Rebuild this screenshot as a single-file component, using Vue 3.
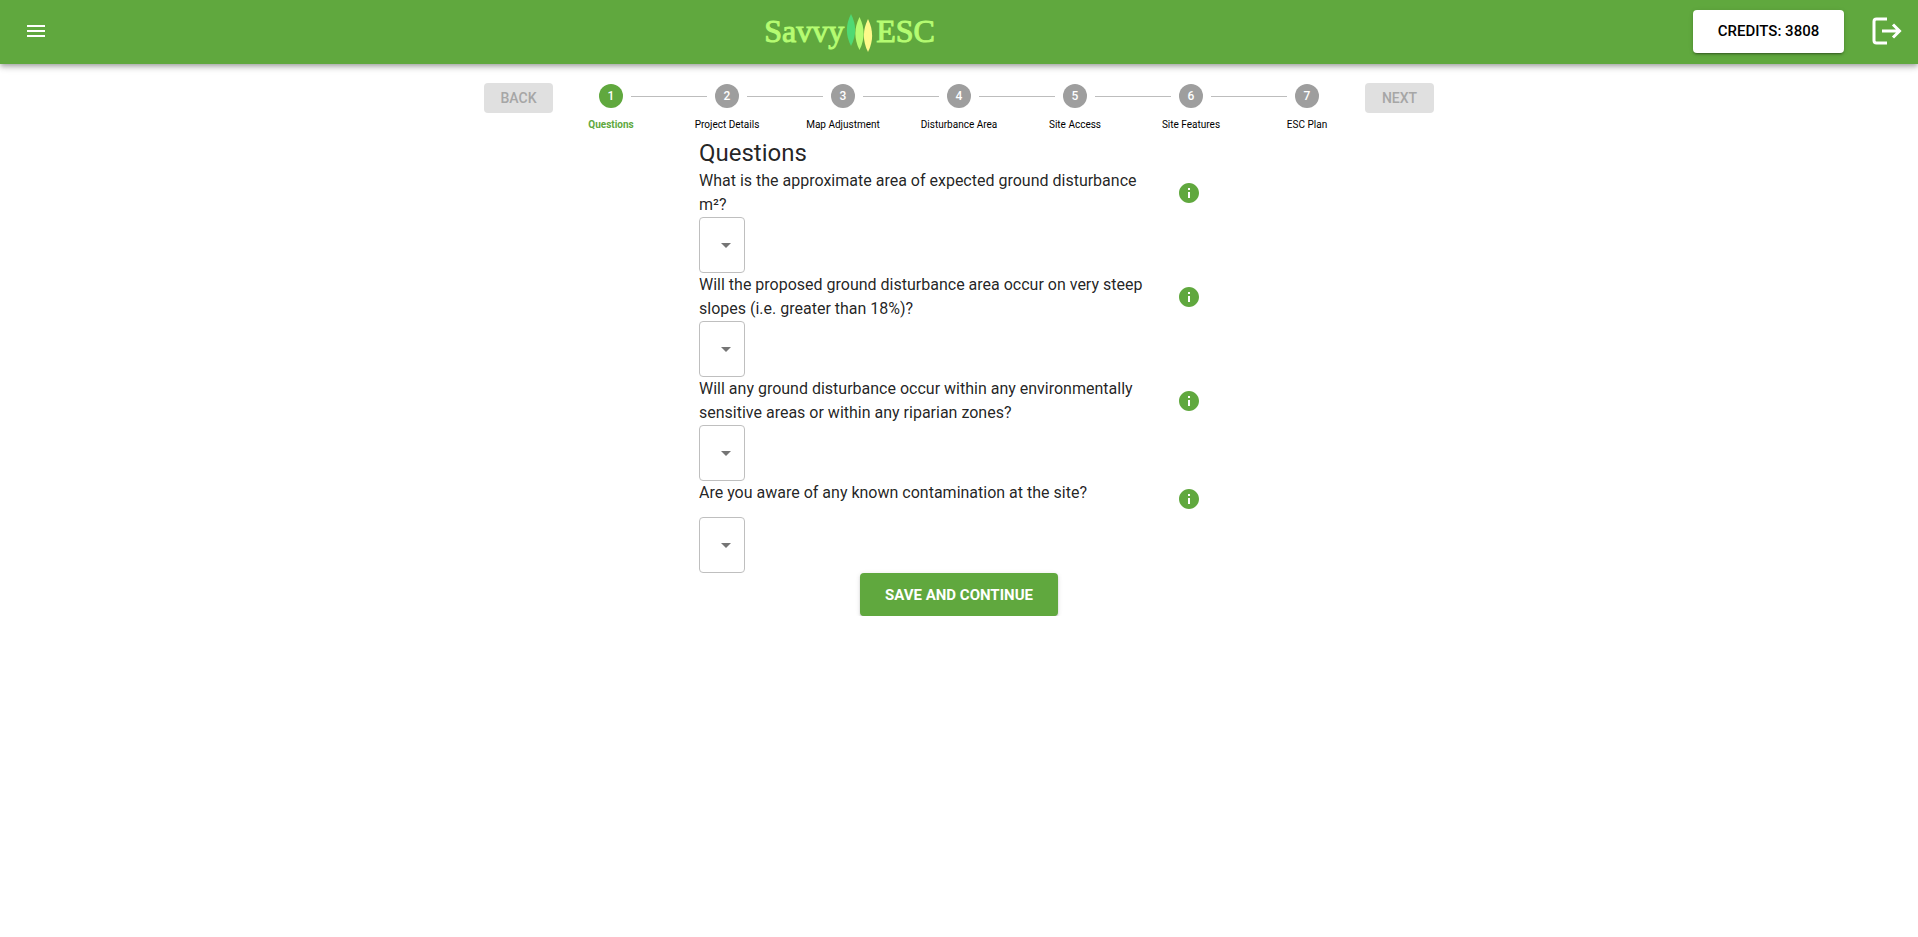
<script setup>
import { ref } from 'vue'

const credits = ref(3808)
const current = ref(1)
const steps = [
  'Questions',
  'Project Details',
  'Map Adjustment',
  'Disturbance Area',
  'Site Access',
  'Site Features',
  'ESC Plan'
]
const questions = ref([
  { id: 'area', text: 'What is the approximate area of expected ground disturbance m²?', answer: '' },
  { id: 'slopes', text: 'Will the proposed ground disturbance area occur on very steep slopes (i.e. greater than 18%)?', answer: '' },
  { id: 'riparian', text: 'Will any ground disturbance occur within any environmentally sensitive areas or within any riparian zones?', answer: '' },
  { id: 'contamination', text: 'Are you aware of any known contamination at the site?', answer: '' }
])
</script>

<template>
  <div class="app">
    <header class="bar">
      <button class="icon-btn menu" type="button" aria-label="Menu">
        <svg width="24" height="24" viewBox="0 0 24 24"><path fill="currentColor" d="M3 18h18v-2H3v2zm0-5h18v-2H3v2zm0-7v2h18V6H3z" /></svg>
      </button>
      <a class="logo" href="#" aria-label="Savvy ESC">
        <span>Savvy</span>
        <svg width="28" height="44" viewBox="0 0 28 44">
          <path fill="#4fd973" d="M5 5C10.500 16 10.500 26 5 37C-.5 26 -.5 16 5 5Z" />
          <path fill="#b5fc72" d="M13.500 8C19 19 19 30 13.500 41C8 30 8 19 13.500 8Z" />
          <path fill="#fdf98a" d="M22 10C27.500 21 27.500 32 22 43C16.500 32 16.500 21 22 10Z" />
        </svg>
        <span>ESC</span>
      </a>
      <div class="account">
        <button class="credits" type="button">CREDITS: {{ credits }}</button>
        <button class="icon-btn" type="button" aria-label="Log out">
          <svg width="30" height="28" viewBox="0 0 30 28" fill="none" stroke="currentColor" stroke-width="3">
            <path d="M15 2H4.500Q2 2 2 4.500V23.500Q2 26 4.500 26H15" />
            <path d="M10 14H28M21 7.500L27.500 14L21 20.500" />
          </svg>
        </button>
      </div>
    </header>

    <main>
      <nav class="progress" aria-label="Progress">
        <button class="step-btn" type="button" disabled>BACK</button>
        <ol class="steps">
          <li v-for="(label, i) in steps" :key="label" class="step" :class="{ active: i + 1 === current }">
            <span class="num">{{ i + 1 }}</span>
            <span class="label">{{ label }}</span>
          </li>
        </ol>
        <button class="step-btn" type="button" disabled>NEXT</button>
      </nav>

      <form class="form" @submit.prevent>
        <h1>Questions</h1>
        <div v-for="q in questions" :key="q.id" class="question">
          <div class="row">
            <label :for="q.id">{{ q.text }}</label>
            <button class="icon-btn info" type="button" aria-label="More information">
              <svg width="24" height="24" viewBox="0 0 24 24"><path fill="currentColor" d="M12 2C6.480 2 2 6.480 2 12s4.480 10 10 10 10-4.480 10-10S17.520 2 12 2zm1 15h-2v-6h2v6zm0-8h-2V7h2v2z" /></svg>
            </button>
          </div>
          <div class="select">
            <select :id="q.id" v-model="q.answer">
              <option value=""></option>
            </select>
            <svg class="arrow" width="24" height="24" viewBox="0 0 24 24"><path fill="currentColor" d="M7 10l5 5 5-5z" /></svg>
          </div>
        </div>
        <button class="save" type="submit">SAVE AND CONTINUE</button>
      </form>
    </main>
  </div>
</template>

<style>
body {
  margin: 0;
  background: #fff;
}
</style>

<style scoped>
.app {
  font-family: Roboto, 'Liberation Sans', sans-serif;
  font-size: 16px;
  line-height: 24px;
  color: rgba(0, 0, 0, 0.87);
}

button {
  font-family: inherit;
  border: 0;
  padding: 0;
  cursor: pointer;
}

.icon-btn {
  display: flex;
  align-items: center;
  justify-content: center;
  background: none;
  color: inherit;
}

.bar {
  box-sizing: border-box;
  display: flex;
  align-items: center;
  justify-content: space-between;
  height: 64px;
  padding: 0 16px 2px 12px;
  background: #60a83e;
  color: #fff;
  box-shadow: 0 2px 4px -1px rgba(0, 0, 0, 0.2), 0 4px 5px rgba(0, 0, 0, 0.14), 0 1px 10px rgba(0, 0, 0, 0.12);
}

.menu {
  width: 48px;
  height: 48px;
}

.logo {
  display: flex;
  align-items: center;
  font-family: 'Liberation Serif', serif;
  font-size: 32px;
  line-height: 40px;
  color: #b5fc72;
  -webkit-text-stroke: 1px #b5fc72;
  text-decoration: none;
}

.logo svg {
  margin: 0 2px;
}

.account {
  display: flex;
  align-items: center;
  gap: 28px;
  padding-left: 54px;
}

.credits,
.save {
  height: 43px;
  border-radius: 4px;
  font-size: 15px;
  line-height: 26px;
  box-shadow: 0 3px 1px -2px rgba(0, 0, 0, 0.2), 0 2px 2px rgba(0, 0, 0, 0.14), 0 1px 5px rgba(0, 0, 0, 0.12);
}

.credits {
  min-width: 151px;
  background: #fff;
  color: #000;
  font-weight: 500;
}

.progress {
  display: flex;
  justify-content: center;
  align-items: flex-start;
  width: 950px;
  max-width: 100%;
  margin: 0 auto;
  padding-top: 19px;
}

.step-btn {
  flex: none;
  width: 69px;
  height: 30px;
  border-radius: 4px;
  background: #e0e0e0;
  color: #a6a6a6;
  font-size: 14px;
  font-weight: 500;
}

.steps {
  flex: 1;
  display: flex;
  margin: 0;
  padding: 1px 0 0;
  list-style: none;
}

.step {
  flex: 1;
  position: relative;
  display: flex;
  flex-direction: column;
  align-items: center;
  gap: 8px;
}

.step + .step::before {
  content: '';
  position: absolute;
  top: 12px;
  left: calc(-50% + 20px);
  right: calc(50% + 20px);
  height: 1px;
  background: #bdbdbd;
}

.num {
  width: 24px;
  height: 24px;
  border-radius: 50%;
  background: #9e9e9e;
  color: #fff;
  font-size: 12px;
  font-weight: 500;
  text-align: center;
}

.label {
  font-size: 10px;
  line-height: 18px;
  color: #000;
}

.active .num {
  background: #60a83e;
}

.active .label {
  color: #60a83e;
  font-weight: 700;
}

.form {
  display: flex;
  flex-direction: column;
  width: 520px;
  max-width: 100%;
  margin: 0 auto;
  padding-top: 3px;
}

h1 {
  margin: 0;
  font-size: 24px;
  line-height: 32px;
  font-weight: 400;
}

.row {
  display: grid;
  grid-template-columns: 1fr 36px;
  align-items: center;
  padding-right: 12px;
}

.row label {
  align-self: start;
  padding-right: 8px;
}

.info {
  width: 36px;
  height: 36px;
  color: #60a83e;
}

.select {
  position: relative;
  width: 46px;
  height: 56px;
}

.select select {
  appearance: none;
  box-sizing: border-box;
  width: 100%;
  height: 100%;
  border: 1px solid #bfbfbf;
  border-radius: 4px;
  background: #fff;
  font: inherit;
}

.arrow {
  position: absolute;
  top: 16px;
  right: 7px;
  color: #757575;
  pointer-events: none;
}

.save {
  align-self: center;
  min-width: 198px;
  background: #60a83e;
  color: #fff;
  font-weight: 700;
}
</style>
